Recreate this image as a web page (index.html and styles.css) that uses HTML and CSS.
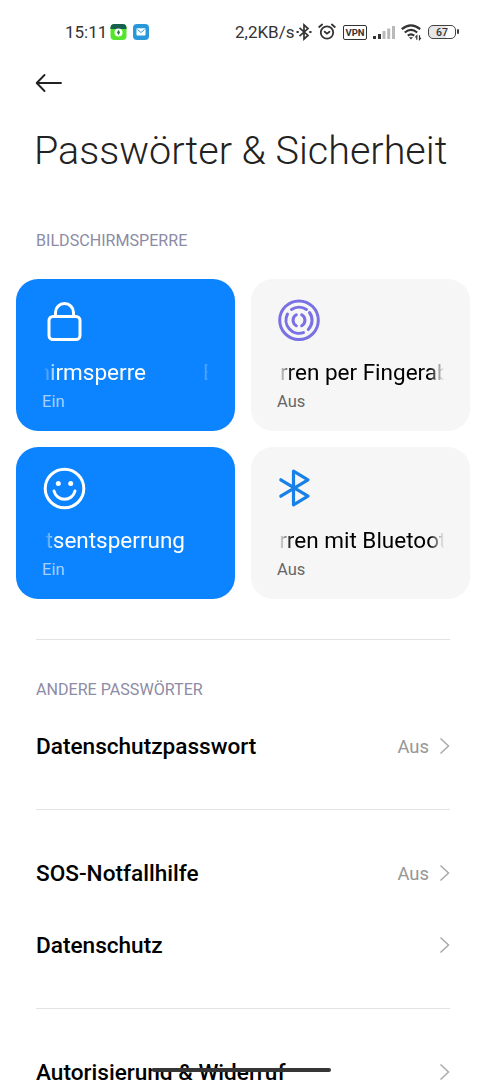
FILE: index.html
```html
<!DOCTYPE html>
<html lang="de">
<head>
<meta charset="utf-8">
<title>Passwörter &amp; Sicherheit</title>
<link rel="stylesheet" href="styles.css">
</head>
<body>
<div class="screen">
  <header class="status">
    <span class="clock">15:11</span>
    <svg class="app-icon" width="17" height="16" viewBox="0 0 17 16"><rect x=".5" width="16" height="16" rx="4" fill="#55e52c"/><path d="M.5 5V4a4 4 0 0 1 4-4h8a4 4 0 0 1 4 4v1z" fill="#17604d"/><circle cx="8.5" cy="8.5" r="4" fill="#fff"/><path d="M8.5 5.8 10 8.5 8.5 11 7 8.5z" fill="#247b3a"/></svg>
    <svg class="app-icon" width="16" height="16" viewBox="0 0 16 16"><rect width="16" height="16" rx="4" fill="#2898db"/><rect x="3.5" y="4.2" width="9" height="7.4" rx=".8" fill="#fff"/><path d="m4.5 5.5 3.5 3 3.5-3" fill="none" stroke="#2898db"/></svg>
    <span class="speed">2,2KB/s</span>
    <svg class="s-bt" width="16" height="18" viewBox="0 0 16 18" fill="none" stroke="#333" stroke-width="1.7"><path d="m3.5 4.8 8.500 7.600L8 16V2l4 3.600-8.500 7.600"/><path d="M.5 9h2.200M13.300 9h2.200" stroke-width="2.200"/></svg>
    <svg class="s-alarm" width="18" height="18" viewBox="0 0 18 18" fill="none" stroke="#333" stroke-width="1.8" stroke-linecap="round"><circle cx="9" cy="9.500" r="6.200"/><path d="m6.700 8.700 2.300 2 2.500-2M1.200 4l2.900-2.500M16.800 4l-2.900-2.500"/></svg>
    <span class="vpn">VPN</span>
    <svg class="s-signal" width="23" height="16" viewBox="0 0 23 16"><path d="M0 12h3v3H0zM5 10h3v5H5z" fill="#333"/><path d="M9.5 7h3v8h-3zM14.2 4.5h3V15h-3zM19 2h3v13h-3z" fill="#b9b9b9"/></svg>
    <svg class="s-wifi" width="22" height="18" viewBox="0 0 22 18" fill="none" stroke="#333" stroke-width="2.2"><path d="M.8 6.200q9.200-7.800 18.400 0M3.800 9.500q6.200-5.200 12.400 0M6.800 12.700q3.200-2.600 6.400 0"/><path d="m7.900 14.200 2.100 2.300 2.100-2.300z" fill="#333" stroke="none"/><path d="M15.800 16.800v-4l-1.400 1.600M18.500 12.300v4.200l1.400-1.600" stroke-width="1.200"/></svg>
    <span class="battery">67</span>
  </header>
  <nav class="back"><svg width="28" height="20" viewBox="0 0 28 20" fill="none" stroke="#222" stroke-width="1.9" stroke-linecap="round" stroke-linejoin="round"><path d="M26 10H2M9.5 2 1.7 10l7.8 8"/></svg></nav>
  <h1 class="title">Passwörter &amp; Sicherheit</h1>
  <h2 class="label label-lock">BILDSCHIRMSPERRE</h2>
  <main class="cards">
    <section class="card on">
      <svg class="icon" width="46" height="46" viewBox="0 0 46 46" fill="none" stroke="#fff" stroke-width="3"><rect x="7" y="17.500" width="31" height="23" rx="4"/><path d="M13.500 17v-3.500a9 9 0 0 1 18 0V17"/></svg>
      <div class="marquee"><div class="ends ends-lock"><span>Bildschirmsperre</span></div><span class="repeat">Bildschirmsperre</span></div>
      <div class="state">Ein</div>
    </section>
    <section class="card">
      <svg class="icon" width="46" height="46" viewBox="0 0 46 46" fill="none" stroke="#7870e4" stroke-width="3" stroke-linecap="round"><circle cx="22" cy="21.200" r="19.300"/><path d="M14.500 10.500a13.200 13.200 0 0 1 15 0M32.500 13.500a13.200 13.200 0 0 1-1.200 17M26.500 33.600A13.200 13.200 0 0 1 10.500 15"/><path d="M19.300 15.800a6.200 6.200 0 0 0 0 10.900M24.700 15.800a6.200 6.200 0 0 1 0 10.900"/></svg>
      <div class="marquee"><div class="ends ends-finger"><span>Entsperren per Fingera</span></div><span>bdruck</span></div>
      <div class="state">Aus</div>
    </section>
    <section class="card on">
      <svg class="icon" width="46" height="46" viewBox="0 0 46 46" fill="none" stroke="#fff" stroke-width="3" stroke-linecap="round"><circle cx="22.500" cy="21.500" r="19.300"/><path d="M12 24a10.800 10.800 0 0 0 21 0"/><circle cx="16.300" cy="16.500" r="2.500" fill="#fff" stroke="none"/><circle cx="28.700" cy="16.500" r="2.500" fill="#fff" stroke="none"/></svg>
      <div class="marquee"><div class="ends ends-face"><span>Gesichtsentsperrung</span></div></div>
      <div class="state">Ein</div>
    </section>
    <section class="card">
      <svg class="icon" width="46" height="46" viewBox="0 0 46 46" fill="none" stroke="#1980e8" stroke-width="3.200" stroke-linecap="round" stroke-linejoin="round"><path d="m3.800 12.800 27.200 16.400L16.500 37.800V4.200L31 12.800 3.800 29.200"/></svg>
      <div class="marquee"><div class="ends ends-bt"><span>Entsperren mit Bluetoo</span></div><span>th-Gerät</span></div>
      <div class="state">Aus</div>
    </section>
  </main>
  <hr class="rule rule-cards">
  <h2 class="label label-other">ANDERE PASSWÖRTER</h2>
  <div class="row"><span class="name">Datenschutzpasswort</span><span class="value">Aus</span><svg class="chev" width="12" height="18" viewBox="0 0 12 18"><path d="m1.500 1.500 8 7.500-8 7.500"/></svg></div>
  <hr class="rule rule-mid">
  <div class="row"><span class="name">SOS-Notfallhilfe</span><span class="value">Aus</span><svg class="chev" width="12" height="18" viewBox="0 0 12 18"><path d="m1.500 1.500 8 7.500-8 7.500"/></svg></div>
  <div class="row"><span class="name">Datenschutz</span><svg class="chev" width="12" height="18" viewBox="0 0 12 18"><path d="m1.500 1.500 8 7.500-8 7.500"/></svg></div>
  <hr class="rule rule-low">
  <div class="row"><span class="name">Autorisierung &amp; Widerruf</span><svg class="chev" width="12" height="18" viewBox="0 0 12 18"><path d="m1.500 1.500 8 7.500-8 7.500"/></svg></div>
  <div class="home-bar"></div>
</div>
</body>
</html>
```
FILE: styles.css
```css
* { box-sizing: border-box; }
body { margin: 0; background: #fff; font-family: Roboto, sans-serif; }
.screen { position: relative; width: 486px; height: 1080px; overflow: hidden; background: #fff; color: #000; display: flex; flex-direction: column; }
.screen > * { flex-shrink: 0; }
.status { height: 64px; padding-left: 65px; display: flex; align-items: center; color: #333; font-size: 17px; white-space: nowrap; }
.clock { width: 45px; }
.app-icon { margin-right: 6px; }
.speed { margin-left: 80px; width: 61px; }
.s-bt { margin-right: 6px; }
.s-alarm { margin-right: 7px; }
.vpn { width: 24px; height: 15px; border: 1.5px solid #333; border-radius: 2px; font-size: 9.5px; font-weight: 700; line-height: 13px; text-align: center; }
.s-signal { margin-left: 6px; }
.s-wifi { margin-left: 5px; }
.battery { position: relative; width: 28px; height: 14px; margin-left: 5px; border: 1.5px solid #444; border-radius: 5px; background: linear-gradient(90deg, #e6e6e6 67%, #fff 67%); font-size: 10.5px; font-weight: 500; line-height: 13px; text-align: center; }
.battery::after { content: ""; position: absolute; right: -4px; top: 3px; width: 2px; height: 5px; background: #444; border-radius: 1px; }
.back { height: 38px; padding: 9px 0 0 35px; }
.back svg { display: block; }
.title { margin: 0; height: 98px; padding-left: 34px; font-size: 39.5px; font-weight: 300; line-height: 98px; color: #222; white-space: nowrap; }
.label { margin: 0; padding-left: 36px; font-size: 16.1px; font-weight: 400; line-height: 20px; color: #8d8ba5; }
.label-lock { margin-top: 31px; }
.cards { display: grid; grid-template-columns: 219px 219px; grid-auto-rows: 152px; gap: 16px; margin: 28px 0 0 16px; }
.card { border-radius: 22px; padding: 20px 26px 0; background: #f6f6f6; color: #000; }
.on { background: #0d84ff; color: #fff; }
.icon { display: block; }
.marquee { display: flex; height: 30px; margin-top: 12px; line-height: 30px; font-size: 22.5px; white-space: nowrap; overflow: hidden; mask-image: linear-gradient(90deg, transparent 2px, #000 15px, #000 153px, transparent); }
.ends { display: flex; flex: none; justify-content: flex-end; }
.ends-lock { width: 104px; }
.ends-finger { width: 160px; }
.ends-face { width: 143px; }
.ends-bt { width: 162px; }
.repeat { margin-left: 57px; }
.state { margin-top: 5px; font-size: 16.5px; line-height: 20px; color: #666; }
.on .state { color: #a4d0ff; }
.rule { width: 414px; height: 1px; margin: 0 0 0 36px; border: 0; background: #e3e3e3; }
.rule-cards { margin-top: 40px; }
.label-other { margin-top: 40px; }
.row { height: 72px; padding: 0 35px 0 36px; display: flex; align-items: center; font-size: 22.6px; }
.label-other + .row { margin-top: 10px; }
.name { flex: 1; font-weight: 500; white-space: nowrap; }
.value { margin-right: 10px; font-size: 18.4px; color: #969696; }
.chev { fill: none; stroke: #aaa; stroke-width: 1.5; }
.rule-mid { margin-top: 27px; margin-bottom: 27px; }
.rule-low { margin-top: 27px; margin-bottom: 27px; }
.home-bar { position: absolute; left: 152px; top: 1068px; width: 179px; height: 4px; border-radius: 2px; background: #363636; }
```
